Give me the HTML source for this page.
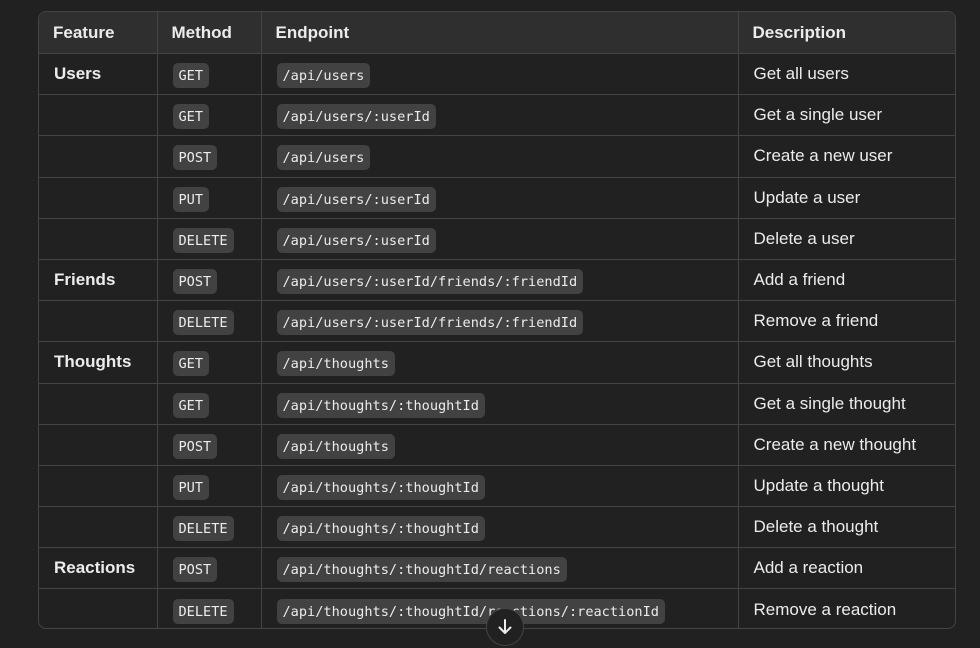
<!DOCTYPE html>
<html><head><style>
body{margin:0;background:#212121;width:980px;height:643px;overflow:hidden;font-family:"Liberation Sans",sans-serif;color:#ececec}
.t{position:absolute;left:38px;top:11px;width:918px;height:618px;border:1px solid #444;border-radius:8px;box-sizing:border-box;overflow:hidden}
table{border-collapse:collapse;width:100%;table-layout:fixed}
th{background:#2f2f2f;height:41px;text-align:left;font-weight:bold;font-size:17px;padding:0 0 0 14px;border-left:1px solid #444}
td{height:41.2px;padding:0 0 0 15px;border-left:1px solid #444;border-top:1px solid #444;font-size:17px;box-sizing:border-box}
th:first-child,td:first-child{border-left:none}
td:first-child{font-weight:bold}
code{font-family:"DejaVu Sans Mono","Liberation Mono",monospace;font-size:13.6px;background:#424242;border-radius:5px;padding:5px 6px 4px;color:#ececec;position:relative;top:1px}
.b{position:absolute;left:486px;top:608px;width:36px;height:36px;border-radius:50%;background:#212121;border:1px solid #444;color:#ececec;text-align:center;font-size:20px;line-height:36px}
</style></head><body>
<div class="t"><table>
<colgroup><col style="width:118px"><col style="width:104px"><col style="width:477px"><col></colgroup>
<tr><th>Feature</th><th>Method</th><th>Endpoint</th><th>Description</th></tr>
<tr><td>Users</td><td><code>GET</code></td><td><code>/api/users</code></td><td>Get all users</td></tr>
<tr><td></td><td><code>GET</code></td><td><code>/api/users/:userId</code></td><td>Get a single user</td></tr>
<tr><td></td><td><code>POST</code></td><td><code>/api/users</code></td><td>Create a new user</td></tr>
<tr><td></td><td><code>PUT</code></td><td><code>/api/users/:userId</code></td><td>Update a user</td></tr>
<tr><td></td><td><code>DELETE</code></td><td><code>/api/users/:userId</code></td><td>Delete a user</td></tr>
<tr><td>Friends</td><td><code>POST</code></td><td><code>/api/users/:userId/friends/:friendId</code></td><td>Add a friend</td></tr>
<tr><td></td><td><code>DELETE</code></td><td><code>/api/users/:userId/friends/:friendId</code></td><td>Remove a friend</td></tr>
<tr><td>Thoughts</td><td><code>GET</code></td><td><code>/api/thoughts</code></td><td>Get all thoughts</td></tr>
<tr><td></td><td><code>GET</code></td><td><code>/api/thoughts/:thoughtId</code></td><td>Get a single thought</td></tr>
<tr><td></td><td><code>POST</code></td><td><code>/api/thoughts</code></td><td>Create a new thought</td></tr>
<tr><td></td><td><code>PUT</code></td><td><code>/api/thoughts/:thoughtId</code></td><td>Update a thought</td></tr>
<tr><td></td><td><code>DELETE</code></td><td><code>/api/thoughts/:thoughtId</code></td><td>Delete a thought</td></tr>
<tr><td>Reactions</td><td><code>POST</code></td><td><code>/api/thoughts/:thoughtId/reactions</code></td><td>Add a reaction</td></tr>
<tr><td></td><td><code>DELETE</code></td><td><code>/api/thoughts/:thoughtId/reactions/:reactionId</code></td><td>Remove a reaction</td></tr>
</table></div>
<div class="b"><svg width="18" height="18" viewBox="0 0 18 18" style="margin-top:9px"><path d="M9 2v13M3.5 9.5L9 15l5.5-5.5" stroke="#ececec" stroke-width="2" fill="none" stroke-linecap="round" stroke-linejoin="round"/></svg></div>
</body></html>
